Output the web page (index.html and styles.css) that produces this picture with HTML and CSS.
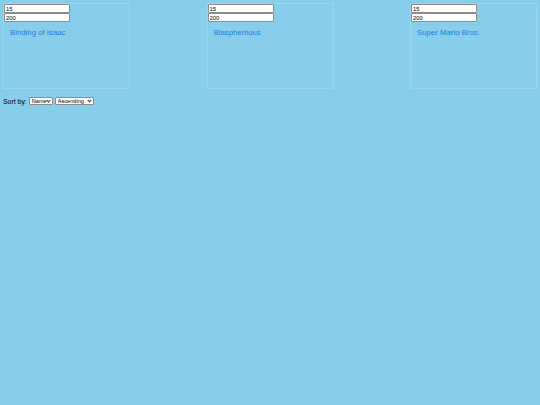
FILE: index.html
```html
<!DOCTYPE html>
<html>
<head>
<meta charset="utf-8">
<link rel="stylesheet" href="styles.css">
</head>
<body>
<div class="games">
  <div class="card">
    <input class="field" type="text" value="15">
    <input class="field" type="text" value="200">
    <div class="title">Binding of Isaac</div>
  </div>
  <div class="card">
    <input class="field" type="text" value="15">
    <input class="field" type="text" value="200">
    <div class="title">Blasphemous</div>
  </div>
  <div class="card">
    <input class="field" type="text" value="15">
    <input class="field" type="text" value="200">
    <div class="title">Super Mario Bros.</div>
  </div>
</div>
<div class="sort">
  <span class="sort-label">Sort by:</span>
  <span class="pick-wrap pick-name"><select class="pick"><option>Name</option><option>Price</option></select></span>
  <span class="pick-wrap pick-order"><select class="pick"><option>Ascending</option><option>Descending</option></select></span>
</div>
</body>
</html>
```
FILE: styles.css
```css
html, body {
  margin: 0;
  padding: 0;
}
body {
  background: #87ceeb;
  font-family: "Liberation Sans", Arial, sans-serif;
  padding: 3px 3px 3px 3px;
  min-height: 405px;
  box-sizing: border-box;
}
.games {
  display: flex;
  justify-content: space-between;
}
.card {
  width: 127px;
  height: 86px;
  box-sizing: border-box;
  border: 1px solid rgba(255, 255, 255, 0.18);
  border-radius: 1px;
  display: flex;
  flex-direction: column;
  align-items: flex-start;
}
.field {
  width: 66px;
  height: 9px;
  box-sizing: border-box;
  margin: 0;
  padding: 0 1px;
  border: 1px solid #8c8c8c;
  border-radius: 1px;
  background: #fff;
  font-family: "Liberation Sans", Arial, sans-serif;
  font-size: 5.8px;
  color: #000;
  outline: none;
}
.title {
  margin: 6px 0 0 6px;
  font-size: 7.8px;
  color: #1c7fdc;
  line-height: 9px;
}
.sort {
  margin-top: 8px;
  display: flex;
  align-items: center;
  gap: 2px;
  font-size: 6.9px;
  color: #000;
}
.sort-label {
  margin-right: 0;
}
.pick-wrap {
  position: relative;
  display: inline-block;
  height: 8px;
}
.pick-wrap::after {
  content: "";
  position: absolute;
  right: 3px;
  top: 2px;
  width: 2px;
  height: 2px;
  border-right: 1px solid #333;
  border-bottom: 1px solid #333;
  transform: rotate(45deg);
  pointer-events: none;
}
.pick {
  -webkit-appearance: none;
  appearance: none;
  display: block;
  width: 100%;
  height: 8px;
  box-sizing: border-box;
  margin: 0;
  padding: 0 0 0 2px;
  font-family: "Liberation Sans", Arial, sans-serif;
  font-size: 5.6px;
  line-height: 6px;
  color: #000;
  border: 1px solid #8c8c8c;
  border-radius: 1px;
  background: #fff;
}
.pick-name { width: 24px; }
.pick-order { width: 39px; }
```
